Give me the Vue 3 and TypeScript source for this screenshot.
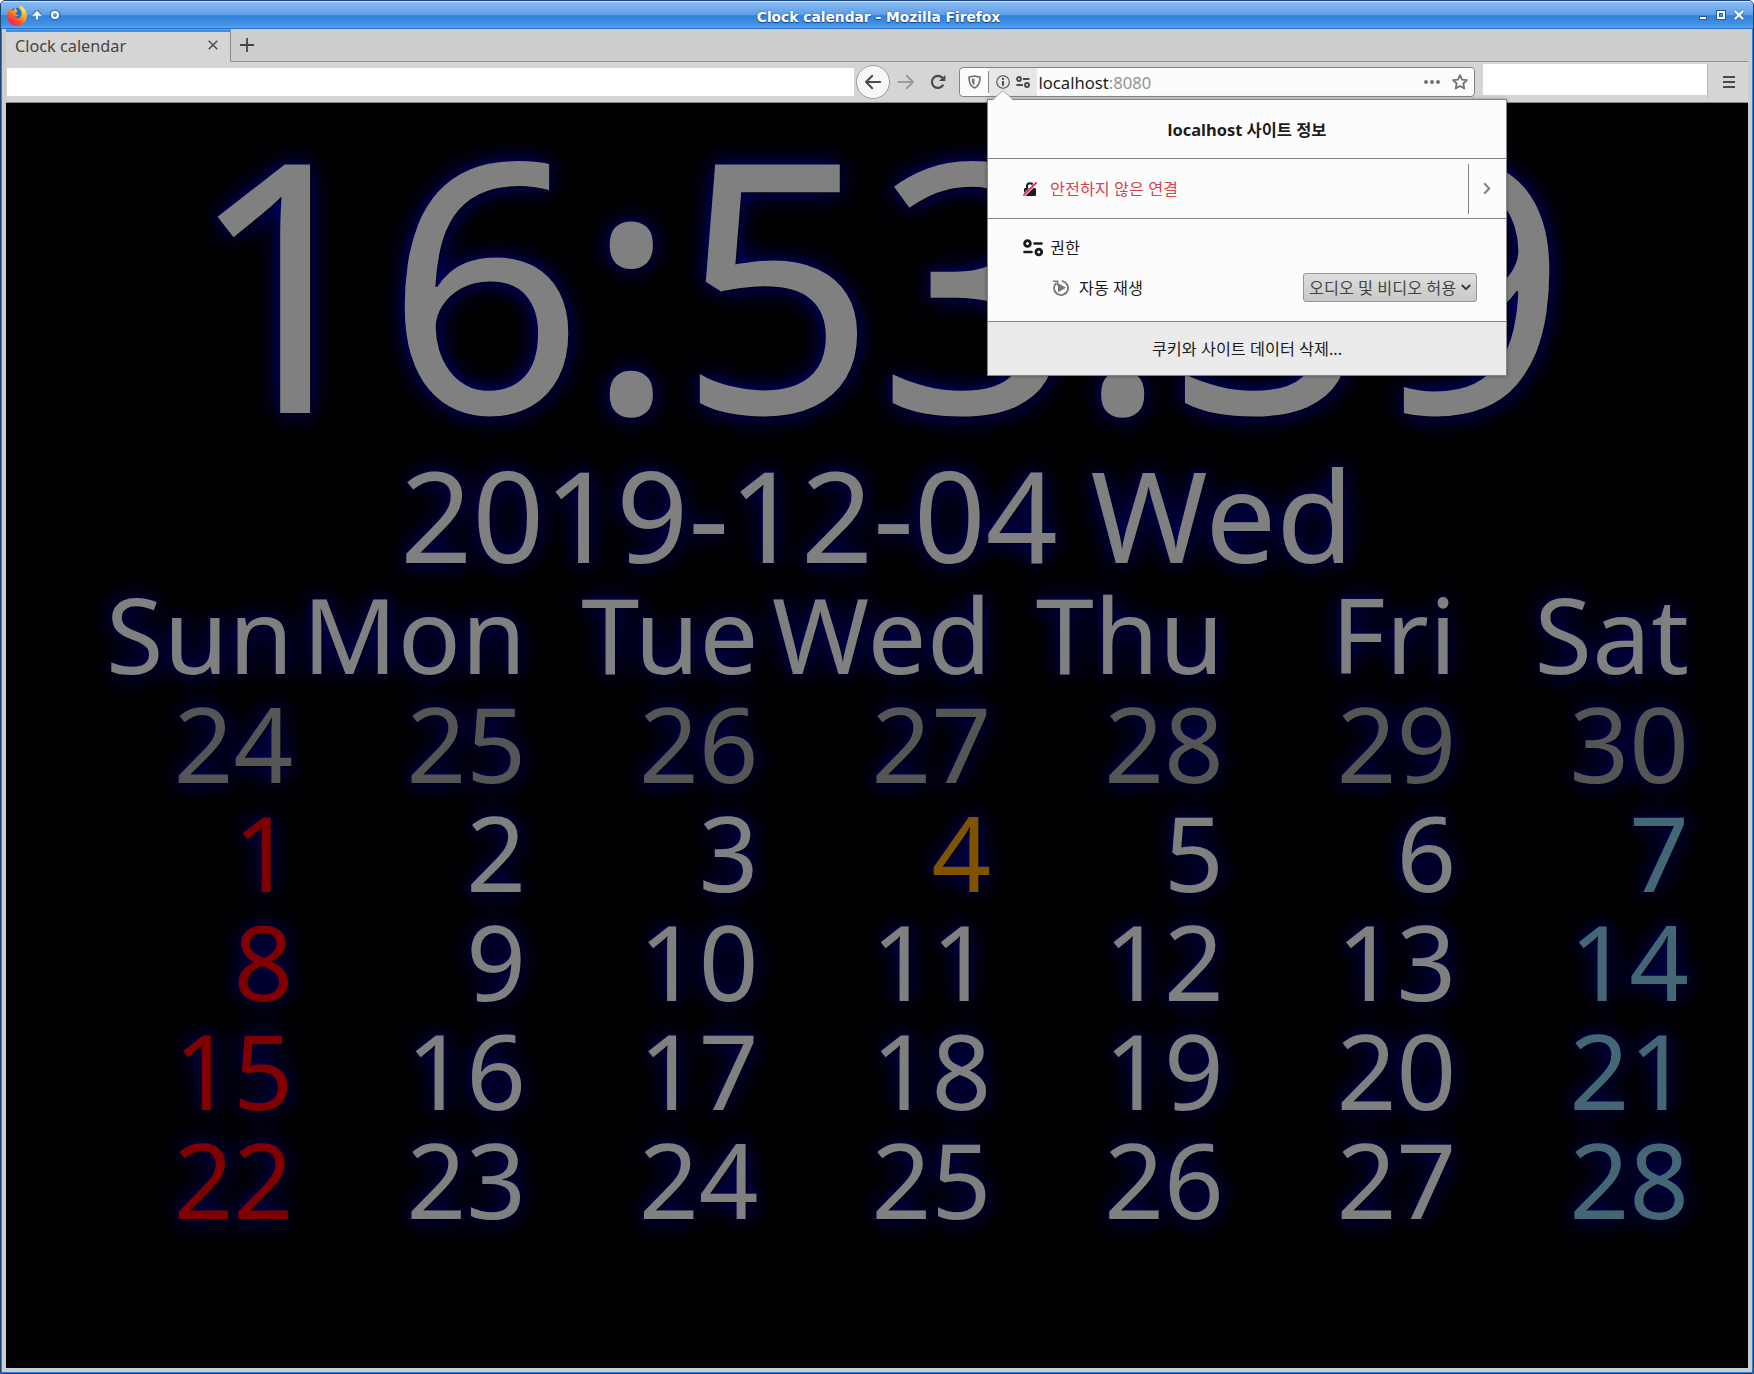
<script setup lang="ts">
type Kind = 'norm' | 'head' | 'dim' | 'sun' | 'sat' | 'today'
interface Cell { text: string; kind: Kind }

const weekdays = ['Sun', 'Mon', 'Tue', 'Wed', 'Thu', 'Fri', 'Sat']

const cells: Cell[] = weekdays.map((text) => ({ text, kind: 'head' as Kind }))
for (let i = 0; i < 35; i++) {
  const col = i % 7
  const day = i < 7 ? 24 + i : i - 6
  let kind: Kind = 'norm'
  if (i < 7) kind = 'dim'
  else if (day === 4) kind = 'today'
  else if (col === 0) kind = 'sun'
  else if (col === 6) kind = 'sat'
  cells.push({ text: String(day), kind })
}
</script>

<template>
  <div class="window">
    <header class="titlebar">
      <svg class="fox" width="20" height="21" viewBox="0 0 20 21">
        <defs>
          <linearGradient id="fx" x1="0.85" y1="0.05" x2="0.2" y2="0.95">
            <stop offset="0" stop-color="#fff44f" />
            <stop offset="0.35" stop-color="#ffb020" />
            <stop offset="0.65" stop-color="#ff5a26" />
            <stop offset="1" stop-color="#f0186b" />
          </linearGradient>
        </defs>
        <circle cx="9.5" cy="9.8" r="7" fill="#1a6fd8" />
        <path fill="url(#fx)" d="M2 3.2 4 6C5 5 6 5 7 5.200c0-1 1-2 2-2.600-.4 1.500.3 2.200 1.600 3.200-.2 1.300-2 1.700-2 2.700.8 1.500 2 1.500 3.200 1.500-1 2-3.500 1.700-4.500 1 1 2.500 4 3 6 1.200 2-2 1.600-4.600.4-7.200L12 3.600 13.500 0.500C18 3 20 7 19.800 11.300 19.500 17 15 20.700 10 20.700 4 20.700 0 16 .1 10.500.2 7.500 1 5 2 3.200z" />
      </svg>
      <svg class="up" width="10" height="11" viewBox="0 0 10 11"><path d="M5 1.200V9.500M1.500 5 5 1.500 8.500 5" stroke="#27609f" stroke-width="4" fill="none" opacity=".45" /><path d="M5 2v7.500" stroke="#fff" stroke-width="2.200" /><path d="M.8 5.800 5 1.200l4.200 4.600H7L5 3.800 3 5.800z" fill="#fff" stroke="#fff" stroke-width=".6" /></svg>
      <svg class="ring" width="12" height="12" viewBox="0 0 12 12"><circle cx="6" cy="6" r="4.500" fill="none" stroke="#1f5795" stroke-width="2" opacity=".5" /><circle cx="6" cy="6" r="3" fill="none" stroke="#fff" stroke-width="2" /></svg>
      <span class="caption">Clock calendar - Mozilla Firefox</span>
      <svg class="winbtns" width="48" height="16" viewBox="0 0 48 16">
        <g fill="none" stroke="#235a97" stroke-width="1"><rect x="1.500" y="8.500" width="7" height="3" /><rect x="18.500" y="2.500" width="9" height="9" /><rect x="21.500" y="5.500" width="3.500" height="3.500" /></g>
        <path d="M2 9h6v2H2z" fill="#fff" />
        <path d="M19 3h8v8h-8zM21 5v4h4V5z" fill="#fff" fill-rule="evenodd" />
        <path d="m37 3 8 8m0-8-8 8" stroke="#235a97" stroke-width="4" opacity=".5" />
        <path d="m37 3 8 8m0-8-8 8" stroke="#fff" stroke-width="2.300" />
      </svg>
    </header>

    <div class="chrome">
      <div class="tabs">
        <div class="tab">
          <span>Clock calendar</span>
          <svg width="10" height="10" viewBox="0 0 10 10"><path d="m.7.700 8.600 8.600m0-8.600L.7 9.300" stroke="#4c4c4c" stroke-width="1.500" /></svg>
        </div>
        <div class="strip">
          <svg width="14" height="14" viewBox="0 0 14 14"><path d="M7 0v14M0 7h14" stroke="#444" stroke-width="1.800" /></svg>
        </div>
      </div>

      <nav class="toolbar">
        <div class="blank left"></div>
        <div class="back">
          <svg width="18" height="16" viewBox="0 0 18 16"><path d="M16.200 8H2.500M8.200 1.800 2 8l6.200 6.200" fill="none" stroke="#4a4a4a" stroke-width="2" stroke-linecap="round" stroke-linejoin="round" /></svg>
        </div>
        <svg class="fwd" width="18" height="16" viewBox="0 0 18 16"><path d="M1.500 8H15.500M9.800 1.800 16 8l-6.200 6.200" fill="none" stroke="#9c9c9c" stroke-width="2" stroke-linecap="round" stroke-linejoin="round" /></svg>
        <svg class="reload" width="16" height="16" viewBox="0 0 16 16"><path d="M12.800 11.400A6 6 0 1 1 12.300 3.800" fill="none" stroke="#4a4a4a" stroke-width="2.200" stroke-linecap="round" /><path d="M15.400.900v6.200H9z" fill="#4a4a4a" /></svg>
        <div class="urlbar">
          <div class="shield">
            <svg width="13" height="14" viewBox="0 0 13 14"><path d="M6.500 1 12 2.200c0 5-.8 8.600-5.500 10.800C1.800 10.800 1 7.200 1 2.200z" fill="none" stroke="#737373" stroke-width="1.700" stroke-linejoin="round" /><path d="M6.500 3.300v7.300C4.400 9 3.700 7 3.700 3.900z" fill="#737373" /></svg>
          </div>
          <div class="identity">
            <svg width="14" height="14" viewBox="0 0 14 14"><circle cx="7" cy="7" r="6.300" fill="none" stroke="#4a4a4a" stroke-width="1.100" /><circle cx="7" cy="3.900" r="1.050" fill="#3c3c3c" /><path d="M7 6v4.800" stroke="#3c3c3c" stroke-width="1.800" /></svg>
            <svg width="14" height="12" viewBox="0 0 14 12"><g fill="none" stroke="#4a4a4a" stroke-width="1.900"><circle cx="3" cy="3" r="2" /><path d="M7 3h6.500M.5 9H7" /><circle cx="11" cy="9" r="2" /></g></svg>
          </div>
          <div class="address">localhost<span>:8080</span></div>
          <svg class="dots" width="16" height="4" viewBox="0 0 16 4"><g fill="#737373"><circle cx="2" cy="2" r="2" /><circle cx="8" cy="2" r="2" /><circle cx="14" cy="2" r="2" /></g></svg>
          <svg class="star" width="16" height="16" viewBox="0 0 16 16"><path d="m8 1.200 2 4.500 5 .5-3.700 3.300 1 5L8 12l-4.300 2.500 1-5L1 6.200l5-.5z" fill="none" stroke="#737373" stroke-width="1.800" stroke-linejoin="round" /></svg>
        </div>
        <div class="blank right"></div>
        <svg class="menu" width="12" height="12" viewBox="0 0 12 12"><path d="M0 1h12M0 6h12M0 11h12" stroke="#4a4a4a" stroke-width="2" stroke-linecap="round" /></svg>
      </nav>

      <main class="page">
        <div class="fade">
          <div class="clock">16:53:39</div>
          <div class="date">2019-12-04 Wed</div>
          <div class="calendar">
            <span v-for="(c, i) in cells" :key="i" :class="c.kind">{{ c.text }}</span>
          </div>
        </div>
      </main>
    </div>

    <section class="popup">
      <svg class="arrow" width="20" height="10" viewBox="0 0 20 10"><path d="M0 10 10 .7 20 10z" fill="#fcfcfc" /><path d="M.3 9.200 10 .5l9.700 8.700" fill="none" stroke="#a9a9a9" stroke-width="1" /></svg>
      <div class="row title">localhost 사이트 정보</div>
      <div class="row conn">
        <svg width="14" height="14" viewBox="0 0 14 14"><path d="M4 7V4.200a3 3 0 0 1 6 0V7" fill="none" stroke="#1c1c20" stroke-width="2" /><rect x="1" y="6" width="12" height="8" rx="1.200" fill="#1c1c20" /><path d="M.2 14 13.800.600" stroke="#fcfcfc" stroke-width="3" /><path d="M.4 13.600 13.600.400" stroke="#f5174f" stroke-width="1.700" /></svg>
        <span>안전하지 않은 연결</span>
        <div class="more"><svg width="8" height="13" viewBox="0 0 8 13"><path d="m1.200 1.200 5 5.300-5 5.300" fill="none" stroke="#828282" stroke-width="2.100" /></svg></div>
      </div>
      <div class="perms">
        <div class="permhead">
          <svg width="20" height="18" viewBox="0 0 20 18"><g fill="none" stroke="#1c1c20" stroke-width="2.800"><circle cx="4.500" cy="4.500" r="2.900" /><path d="M11.400 4.500h7.200M1.400 13h7.200" stroke-linecap="round" stroke-width="2.400" /><circle cx="15.800" cy="13" r="2.900" /></g></svg>
          <span>권한</span>
        </div>
        <div class="perm">
          <svg width="16" height="16" viewBox="0 0 16 16"><path d="M9.500 1.200A7 7 0 1 1 2.600 3.600" fill="none" stroke="#777" stroke-width="1.800" stroke-linecap="round" /><path d="M0 1.300h4.500v4.500" fill="none" stroke="#777" stroke-width="1.600" /><path d="M5 3.200 13 7.700 5 12.200z" fill="#777" /></svg>
          <span>자동 재생</span>
          <div class="select">오디오 및 비디오 허용<svg width="10" height="7" viewBox="0 0 10 7"><path d="M.8 1 5 5.200 9.200 1" fill="none" stroke="#3c3c3c" stroke-width="2" /></svg></div>
        </div>
      </div>
      <div class="row foot">쿠키와 사이트 데이터 삭제...</div>
    </section>
  </div>
</template>

<style>
html,
body {
  margin: 0;
  overflow: hidden;
  background: #fff;
}
</style>

<style scoped>
.window,
.window * {
  box-sizing: border-box;
}
.window {
  position: relative;
  display: flex;
  flex-direction: column;
  width: 1754px;
  height: 1374px;
  border: 1px solid #1a4674;
  border-radius: 5px 5px 0 0;
  background: #2a7fdb;
  font: 16.25px/22px 'Noto Sans', 'Noto Sans CJK KR', sans-serif;
  color: #1c1c20;
  overflow: hidden;
}
svg {
  display: block;
  flex: none;
}
.titlebar {
  display: flex;
  align-items: center;
  flex: none;
  height: 28px;
  padding: 0 7px 0 6px;
  border-top: 1px solid #cfe2f7;
  border-bottom: 1px solid #2373cb;
  background: linear-gradient(#8ebcf2 0, #5c9fe8 48%, #3182dc 53%, #4290e4 85%, #5da2ec 100%);
}
.up {
  margin-left: 5px;
}
.ring {
  margin-left: 7px;
}
.caption {
  flex: 1;
  padding: 3px 2px 0 0;
  text-align: center;
  color: #fff;
  font: bold 13.8px/18px 'DejaVu Sans', sans-serif;
  text-shadow: 0 1px 1px #17477d, 0 0 2px #2a6ab0;
}
.winbtns {
  margin-top: 1px;
}
.chrome {
  display: flex;
  flex-direction: column;
  flex: 1;
  margin: 0 1px 1px;
  padding: 0 4px 4px;
  background: #cdcdcd;
}
.tabs {
  display: flex;
  flex: none;
  height: 33px;
}
.tab {
  display: flex;
  align-items: center;
  justify-content: space-between;
  width: 224px;
  padding: 0 12px 2px 9px;
  border-top: 1px solid #909090;
  background: #d5d5d5;
  box-shadow: inset 0 2px #3d8fe6;
  color: #444;
}
.tab span {
  padding-top: 2px;
}
.strip {
  flex: 1;
  padding: 9px 0 0 9px;
  border-left: 1px solid #8f8f8f;
  border-bottom: 1px solid #8f8f8f;
}
.toolbar {
  display: flex;
  align-items: center;
  flex: none;
  height: 41px;
  padding: 0 13px 0 1px;
  border-bottom: 1px solid #858585;
  background: #d5d5d5;
}
.blank {
  background: #fff;
}
.blank.left {
  width: 847px;
  height: 28px;
}
.back {
  display: flex;
  align-items: center;
  justify-content: center;
  width: 34px;
  height: 34px;
  margin-left: 2px;
  border: 1px solid #9c9c9c;
  border-radius: 50%;
  background: #f7f7f7;
}
.fwd {
  margin-left: 7px;
}
.reload {
  margin-left: 15px;
}
.urlbar {
  display: flex;
  align-items: center;
  width: 516px;
  height: 30px;
  margin-left: 13px;
  border: 1px solid #858585;
  border-radius: 4px;
  background: #fcfcfc;
  overflow: hidden;
}
.shield {
  display: flex;
  align-items: center;
  width: 29px;
  height: 22px;
  padding-left: 7.5px;
  border-right: 1px solid #858585;
}
.identity {
  display: flex;
  align-items: center;
  gap: 6px;
  width: 48px;
  height: 28px;
  padding-left: 7px;
  background: #e7e7e7;
}
.address {
  flex: 1;
  padding: 2px 0 0 1.5px;
  font-size: 16.65px;
}
.address span {
  color: #929292;
}
.star {
  margin: 0 6px 0 12px;
}
.blank.right {
  align-self: flex-start;
  width: 225px;
  height: 34px;
  margin: 2px 0 0 8px;
  border-right: 1px solid #bbb;
  background: linear-gradient(#fff 31px, #d5d5d5 31px);
}
.menu {
  margin-left: 15px;
}
.page {
  flex: 1;
  background: #000;
  overflow: hidden;
}
.fade {
  opacity: 0.5;
  color: #fff;
  text-align: center;
  text-shadow: 1px 1px 2px #000, 0 0 25px #00f, 0 0 5px #00008b;
}
.clock {
  font-size: 348px;
  line-height: 350px;
}
.date {
  margin-bottom: 4px;
  font-size: 126px;
  line-height: 122px;
}
.calendar {
  display: grid;
  grid-template-columns: repeat(7, 232.6px);
  grid-auto-rows: 109px;
  margin-left: 54.8px;
  font-size: 104.5px;
  line-height: 109px;
}
.calendar span {
  display: flex;
  justify-content: flex-end;
}
.calendar .head {
  margin-right: -0.4px;
  letter-spacing: 0.4px;
}
.dim {
  color: #aaa;
}
.sun {
  color: #f00;
}
.sat {
  color: #87ceeb;
}
.today {
  color: #ffa500;
}
.popup {
  position: absolute;
  left: 986px;
  top: 98px;
  width: 520px;
  height: 277px;
  border: 1px solid #858585;
  background: #fcfcfc;
  box-shadow: 0 0 4px rgba(0, 0, 0, 0.35);
}
.arrow {
  position: absolute;
  left: 5px;
  top: -10px;
}
.row {
  display: flex;
  align-items: center;
  border-bottom: 1px solid #858585;
}
.title {
  justify-content: center;
  height: 59px;
  padding-top: 2px;
  font-size: 16.45px;
  font-weight: bold;
}
.conn {
  height: 60px;
  padding-left: 35px;
  color: #d7434d;
}
.conn span {
  flex: 1;
  margin-left: 13px;
  padding-top: 1px;
}
.more {
  display: flex;
  align-items: center;
  width: 38px;
  height: 50px;
  padding-left: 14px;
  border-left: 1px solid #858585;
}
.perms {
  height: 103px;
  padding: 18px 29px 0 35px;
  border-bottom: 1px solid #858585;
}
.permhead {
  display: flex;
  align-items: center;
  gap: 7px;
}
.perm {
  display: flex;
  align-items: center;
  height: 29px;
  margin-top: 14px;
  padding-left: 30px;
}
.perm span {
  flex: 1;
  margin-left: 10px;
}
.select {
  display: flex;
  align-items: center;
  justify-content: space-between;
  width: 174px;
  height: 29px;
  padding: 0 5px 0 5px;
  border: 1px solid #969696;
  border-radius: 3px;
  background: linear-gradient(#dedede, #c9c9c9);
  color: #444;
  white-space: nowrap;
}
.foot {
  justify-content: center;
  height: 53px;
  border: 0;
  background: #ebebeb;
}
</style>
